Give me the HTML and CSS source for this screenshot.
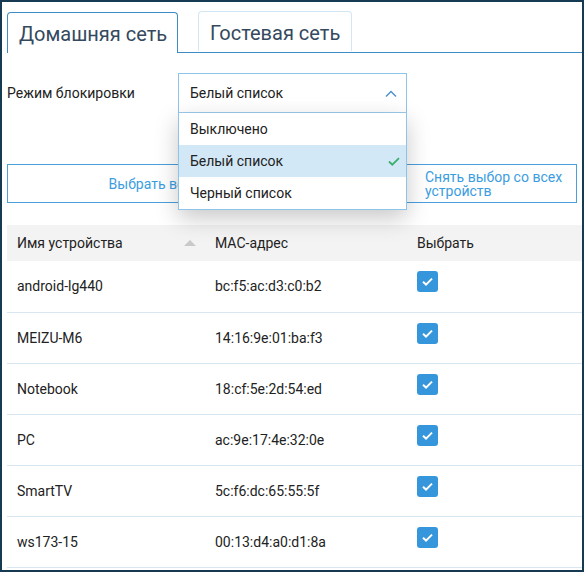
FILE: index.html
```html
<!DOCTYPE html>
<html lang="ru">

<head>
    <meta charset="UTF-8">
    <meta name="viewport" content="width=device-width, initial-scale=1.0">
    <title>Контроль доступа</title>
    <link rel="stylesheet" href="styles.css">
</head>

<body>
    <div class="frame">

        <div class="tabs">
            <div class="tab active">Домашняя сеть</div>
            <div class="tab">Гостевая сеть</div>
        </div>

        <div class="mode-row">
            <span class="label">Режим блокировки</span>
            <div class="select">
                <div class="select-value">
                    <span>Белый список</span>
                    <svg class="chevron" width="12" height="7" viewBox="0 0 12 7">
                        <path d="M1 6.5 L6 1.5 L11 6.5" fill="none" stroke="#4a8ecf" stroke-width="1.4" />
                    </svg>
                </div>
                <ul class="options">
                    <li>Выключено</li>
                    <li class="selected">Белый список
                        <svg width="12" height="9" viewBox="0 0 12 9">
                            <path d="M1 4.5 L4.3 7.7 L11 1.2" fill="none" stroke="#3dae6e" stroke-width="1.8" />
                        </svg>
                    </li>
                    <li>Черный список</li>
                </ul>
            </div>
        </div>

        <div class="actions">
            <button class="btn btn-all">Выбрать все устройства</button>
            <button class="btn btn-none">Снять выбор со всех устройств</button>
        </div>

        <table class="devices">
            <thead>
                <tr>
                    <th class="col-name">Имя устройства <span class="sort"></span></th>
                    <th class="col-mac">MAC-адрес</th>
                    <th>Выбрать</th>
                </tr>
            </thead>
            <tbody id="rows"></tbody>
        </table>

    </div>

    <script>
        // device list
        const devices = [
            ['android-lg440', 'bc:f5:ac:d3:c0:b2'],
            ['MEIZU-M6', '14:16:9e:01:ba:f3'],
            ['Notebook', '18:cf:5e:2d:54:ed'],
            ['PC', 'ac:9e:17:4e:32:0e'],
            ['SmartTV', '5c:f6:dc:65:55:5f'],
            ['ws173-15', '00:13:d4:a0:d1:8a'],
        ]

        const tick = '<svg width="21" height="21" viewBox="0 0 21 21"><path d="M6 10.8 L9 13.6 L15 7.6" fill="none" stroke="#fff" stroke-width="2" /></svg>'

        let rows = document.getElementById('rows')

        devices.forEach(d => {
            let tr = document.createElement('tr')
            tr.innerHTML = '<td>' + d[0] + '</td><td>' + d[1] + '</td><td class="check-cell"><span class="check">' + tick + '</span></td>'
            rows.appendChild(tr)
        })
    </script>

</body>

</html>
```

FILE: styles.css
```css
* {
    margin: 0;
    padding: 0;
    box-sizing: border-box;
}

body {
    font-family: Roboto, "Liberation Sans", sans-serif;
    font-size: 14px;
    color: #222;
    background-color: #173a53;
}

.frame {
    width: 584px;
    height: 572px;
    border: 2px solid #173a53;
    background-color: white;
    overflow: hidden;
}

/* tabs */
.tabs {
    display: flex;
    gap: 20px;
    margin: 9px 0 0 5px;
    border-bottom: 1px solid #3d8cc5;
}

.tab {
    width: 154px;
    height: 40px;
    padding: 9px 0 0 11px;
    font-size: 20px;
    color: #34495e;
    white-space: nowrap;
    border: 1px solid #d3e6f3;
    border-bottom: none;
    border-radius: 4px 4px 0 0;
}

.tab.active {
    width: 171px;
    height: 41px;
    margin-top: 1px;
    margin-bottom: -1px;
    border-color: #3d8cc5;
    background-color: white;
}

/* mode select */
.mode-row {
    display: flex;
    align-items: center;
    margin: 20px 0 0 5px;
}

.label {
    width: 171px;
    font-size: 14px;
}

.select {
    position: relative;
    width: 229px;
}

.select-value {
    display: flex;
    justify-content: space-between;
    align-items: center;
    height: 40px;
    padding: 0 9px 0 11px;
    border: 1px solid #8ec3ea;
    border-bottom-color: #9ccbec;
}

.options {
    position: absolute;
    top: 40px;
    left: 0;
    right: 0;
    list-style: none;
    background-color: white;
    border: 1px solid #8ec3ea;
    border-top: none;
    box-shadow: 0 8px 22px rgba(0, 0, 0, 0.22);
    z-index: 2;
}

.options li {
    display: flex;
    justify-content: space-between;
    align-items: center;
    height: 32px;
    padding: 0 6px 0 11px;
}

.options .selected {
    background-color: #d3e8f6;
}

/* buttons */
.actions {
    display: flex;
    justify-content: space-between;
    margin: 51px 5px 0 5px;
}

.btn {
    height: 39px;
    background-color: white;
    border: 1px solid #4aa0dc;
    color: #3b9de0;
    font-family: inherit;
    font-size: 14px;
    line-height: 14px;
}

.btn-all {
    width: 364px;
}

.btn-none {
    width: 172px;
    padding: 0 10px 0 19px;
    text-align: left;
}

/* table */
.devices {
    width: 575px;
    margin: 22px 0 0 5px;
    border-collapse: collapse;
}

.devices th {
    height: 36px;
    padding-left: 10px;
    text-align: left;
    font-weight: normal;
    background-color: #f3f3f3;
}

.devices .col-name {
    width: 198px;
    position: relative;
}

.devices .col-mac {
    width: 202px;
}

.sort {
    position: absolute;
    right: 9px;
    top: 15px;
    border-left: 6px solid transparent;
    border-right: 6px solid transparent;
    border-bottom: 6px solid #c9c9c9;
}

.devices td {
    height: 51px;
    padding-left: 10px;
    border-bottom: 1px solid #d6e7f2;
}

.devices .check-cell {
    vertical-align: top;
    padding-top: 10px;
}

.check {
    display: block;
    width: 21px;
    height: 21px;
    border-radius: 3px;
    background-color: #3596dc;
}

.check svg {
    display: block;
}
```
